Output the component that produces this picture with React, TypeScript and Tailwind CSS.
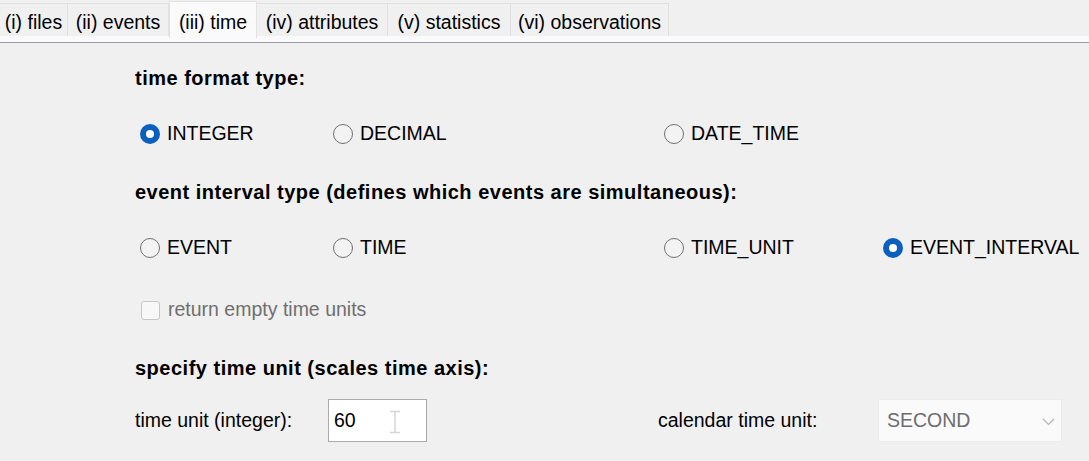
import React from "react";

const tabs = [
  { label: "(i) files", w: 68 },
  { label: "(ii) events", w: 101 },
  { label: "(iii) time", w: 88, active: true },
  { label: "(iv) attributes", w: 131 },
  { label: "(v) statistics", w: 123 },
  { label: "(vi) observations", w: 158 },
];

function Radio({ label, checked }: { label: string; checked?: boolean }) {
  return (
    <div className="flex items-center gap-[7px]">
      {checked ? (
        <span className="w-[20px] h-[20px] rounded-full bg-[#0b5fbe] flex items-center justify-center">
          <span className="w-[8px] h-[8px] rounded-full bg-white" />
        </span>
      ) : (
        <span className="w-[20px] h-[20px] rounded-full border border-[#707070] bg-[#f3f3f3]" />
      )}
      <span>{label}</span>
    </div>
  );
}

export default function App() {
  return (
    <div className="w-[1089px] h-[461px] overflow-hidden bg-[#f0f0f0] text-black text-[19.5px] font-['Liberation_Sans',Arial,sans-serif]">
      {/* tab strip */}
      <div className="flex items-end h-[36px]">
        {tabs.map((t) =>
          t.active ? (
            <div
              key={t.label}
              style={{ width: t.w }}
              className="relative z-10 h-[37px] -mb-[2px] bg-[#fafafa] border-x border-t border-[#e2e2e2] flex justify-center items-start pt-[6px] shrink-0"
            >
              {t.label}
            </div>
          ) : (
            <div
              key={t.label}
              style={{ width: t.w }}
              className="h-[33px] bg-[#f0f0f0] border-r border-t border-[#e0e0e0] flex justify-center items-center pt-[5px] shrink-0"
            >
              {t.label}
            </div>
          )
        )}
      </div>
      <div className="h-[6px] bg-[#fafafa]" />
      <div className="h-px bg-[#9c9ca8]" />

      {/* body */}
      <div className="pl-[135px] flex flex-col">
        <div className="mt-[23px] h-[24px] flex items-center font-bold text-[20px] tracking-[0.5px]">time format type:</div>

        <div className="mt-[29px] h-[24px] grid grid-cols-[193px_331px_219px_auto] items-center pl-[5px]">
          <Radio label="INTEGER" checked />
          <Radio label="DECIMAL" />
          <Radio label="DATE_TIME" />
          <div />
        </div>

        <div className="mt-[37px] h-[24px] flex items-center font-bold text-[20px] tracking-[0.5px]">
          event interval type (defines which events are simultaneous):
        </div>

        <div className="mt-[29px] h-[24px] grid grid-cols-[193px_331px_219px_auto] items-center pl-[5px]">
          <Radio label="EVENT" />
          <Radio label="TIME" />
          <Radio label="TIME_UNIT" />
          <Radio label="EVENT_INTERVAL" checked />
        </div>

        <div className="mt-[41px] h-[24px] flex items-center gap-[8px] pl-[6px] text-[#6f6f6f]">
          <span className="w-[19px] h-[19px] rounded-[3px] border border-[#c6c6c6] bg-[#f7f7f7]" />
          <span>return empty time units</span>
        </div>

        <div className="mt-[34px] h-[24px] flex items-center font-bold text-[20px] tracking-[0.5px]">
          specify time unit (scales time axis):
        </div>

        <div className="mt-[19px] h-[43px] flex items-center">
          <div className="w-[193px]">time unit (integer):</div>
          <div className="relative w-[99px] h-[43px] bg-white border border-[#ababab] flex items-center pl-[5px]">
            <span>60</span>
            <svg className="absolute left-[59px] top-[10px]" width="14" height="24" viewBox="0 0 14 24">
              <path d="M2 1.5 H12 M7 1.5 V22.5 M2 22.5 H12" stroke="#d6d6d6" strokeWidth="1.5" fill="none" />
            </svg>
          </div>
          <div className="w-[231px]" />
          <div className="w-[220px]">calendar time unit:</div>
          <div className="relative w-[184px] h-[43px] bg-[#fafafa] border border-[#ececec] flex items-center pl-[8px] text-[#6d6d6d]">
            <span>SECOND</span>
            <svg className="absolute right-[6px] top-[18px]" width="13" height="8" viewBox="0 0 13 8">
              <path d="M1 1 L6.5 6.5 L12 1" stroke="#b4b4b4" strokeWidth="1.2" fill="none" />
            </svg>
          </div>
        </div>
      </div>
    </div>
  );
}
